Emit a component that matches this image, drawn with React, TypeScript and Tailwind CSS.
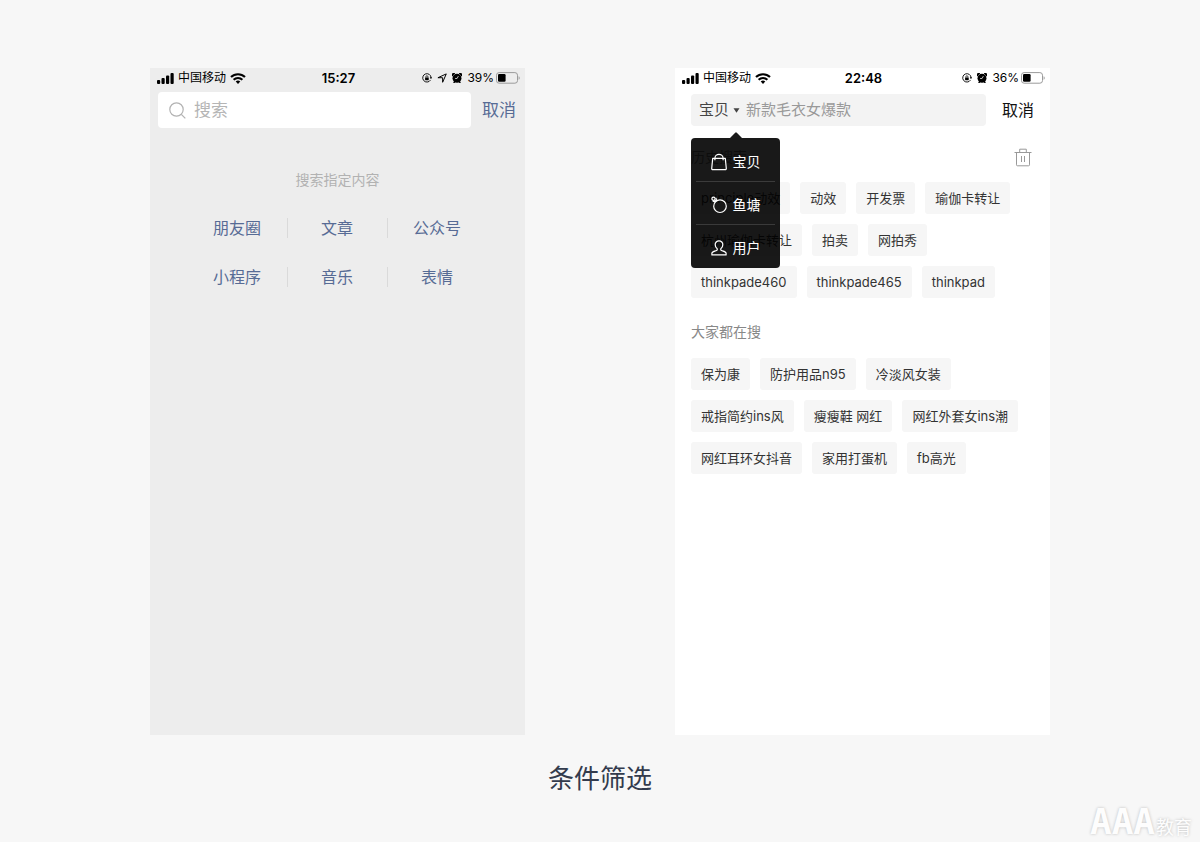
import { useState } from 'react';

const scopes = [
  { key: 'item', name: '宝贝' },
  { key: 'pond', name: '鱼塘' },
  { key: 'user', name: '用户' },
];

const categories = ['朋友圈', '文章', '公众号', '小程序', '音乐', '表情'];

const historyTags = [
  'principle动效',
  '动效',
  '开发票',
  '瑜伽卡转让',
  '杭州瑜伽卡转让',
  '拍卖',
  '网拍秀',
  'thinkpade460',
  'thinkpade465',
  'thinkpad',
];

const hotTags = [
  '保为康',
  '防护用品n95',
  '冷淡风女装',
  '戒指简约ins风',
  '瘦瘦鞋 网红',
  '网红外套女ins潮',
  '网红耳环女抖音',
  '家用打蛋机',
  'fb高光',
];

const SignalIcon = () => (
  <svg width="17" height="11" viewBox="0 0 17 11" aria-hidden="true">
    <rect x="0" y="7" width="3.2" height="4" rx="1" />
    <rect x="4.5" y="5" width="3.2" height="6" rx="1" />
    <rect x="9" y="2.6" width="3.2" height="8.4" rx="1" />
    <rect x="13.5" y="0" width="3.2" height="11" rx="1" />
  </svg>
);

const WifiIcon = () => (
  <svg width="16" height="11" viewBox="0 0 16 11" fill="none" stroke="#000" aria-hidden="true">
    <path d="M1 4.1a10 10 0 0 1 14 0" strokeWidth="2.1" />
    <path d="M3.6 6.8a6.3 6.3 0 0 1 8.8 0" strokeWidth="2" />
    <path d="M5.7 8.4a3.6 3.6 0 0 1 4.6 0L8 11z" fill="#000" stroke="none" />
  </svg>
);

const RotationLockIcon = () => (
  <svg width="10" height="10" viewBox="0 0 11 11" fill="none" stroke="#000" aria-hidden="true">
    <path d="M9.3 7.8A4.6 4.6 0 1 1 10 5.2" strokeWidth="1" />
    <path d="M8.6 4.8h2.4L9.9 6.8z" fill="#000" stroke="none" />
    <rect x="3.4" y="4.9" width="4" height="3" rx="0.4" fill="#000" stroke="none" />
    <path d="M4.3 5V4.1a1.1 1.1 0 0 1 2.2 0V5" strokeWidth="0.8" />
  </svg>
);

const LocationIcon = () => (
  <svg width="10" height="10" viewBox="0 0 11 11" fill="none" stroke="#000" strokeLinejoin="round" aria-hidden="true">
    <path d="M10.2 1 6.2 10.2V5.2H1z" strokeWidth="1.1" />
  </svg>
);

const AlarmIcon = () => (
  <svg width="10" height="10" viewBox="0 0 11 11" aria-hidden="true">
    <circle cx="5.5" cy="5.8" r="4.9" />
    <path d="M.5 3.8A2.2 2.2 0 0 1 3.6.3zM10.5 3.8A2.2 2.2 0 0 0 7.4.3zM2.6 8.4 1.2 10.9h1.7l1-1.2zM8.4 8.4l1.4 2.5H8.1l-1-1.2z" />
    <path d="M7 3.4 5.6 6H3.4" fill="none" stroke="#fff" strokeWidth="0.8" />
  </svg>
);

const BatteryIcon = () => (
  <svg width="24" height="12" viewBox="0 0 24 12" aria-hidden="true">
    <rect x="0.5" y="0.6" width="21" height="10.6" rx="2.6" fill="none" stroke="#9a9a9a" />
    <rect x="2" y="2.1" width="7.6" height="7.6" rx="1.2" />
    <path d="M22.6 4.2c1.5.5 1.5 3 0 3.5z" fill="#9a9a9a" />
  </svg>
);

const SearchIcon = () => (
  <svg width="17" height="17" viewBox="0 0 17 17" fill="none" stroke="#b2b2b2" strokeWidth="1.2" aria-hidden="true">
    <circle cx="7.5" cy="7.5" r="6.7" />
    <path d="m12.3 12.3 4 4" />
  </svg>
);

const TrashIcon = () => (
  <svg width="18" height="19" viewBox="0 0 18 19" fill="none" stroke="#999" aria-hidden="true">
    <path d="M.5 4.5h17M5.7 4.3V1.2h6.6v3.1M2.5 4.7v12.1a1 1 0 0 0 1 1h11a1 1 0 0 0 1-1V4.7M7.5 8v6M10.5 8v6" />
  </svg>
);

const ScopeIcon = ({ type }: { type: string }) => (
  <svg width="16" height="18" viewBox="0 0 16 18" fill="none" stroke="#fff" strokeWidth="1.2" strokeLinejoin="round" aria-hidden="true">
    {type === 'item' && (
      <path d="M1.7 5.4h12.6l1 10.1a1 1 0 0 1-1 1.1H1.7a1 1 0 0 1-1-1.1zM3.9 7.3V5.2a4.1 3.9 0 0 1 8.2 0v2.1" />
    )}
    {type === 'pond' && (
      <>
        <circle cx="9" cy="10.2" r="6.3" />
        <circle cx="2.5" cy="2.7" r="1.6" />
        <path d="M3.7 4 5 5.3M1.7 5.2l2.7.6M4.9 1.8l.8 3" />
      </>
    )}
    {type === 'user' && (
      <path d="M8 1.8a3.8 3.8 0 0 0-3.8 4c0 1.7.8 3.1 2 4 .4 1-.3 1.6-1.3 1.9-2 .6-3.8 1-4 2.5v1.7h14.2v-1.7c-.2-1.5-2-1.9-4-2.5-1-.3-1.7-.9-1.3-1.9 1.2-.9 2-2.3 2-4a3.8 3.8 0 0 0-3.8-4z" />
    )}
  </svg>
);

const StatusBar = ({ time, battery, showLocation }: { time: string; battery: string; showLocation?: boolean }) => (
  <header className="flex h-5 items-center pl-[7px] pr-[5px] text-xs leading-5 text-black">
    <div className="flex flex-1 items-center gap-1">
      <SignalIcon />
      <span>中国移动</span>
      <WifiIcon />
    </div>
    <time className="text-[13px] font-semibold leading-5">{time}</time>
    <div className="flex flex-1 items-center justify-end gap-[5px]">
      <RotationLockIcon />
      {showLocation && <LocationIcon />}
      <AlarmIcon />
      <div className="flex items-center gap-[2px]">
        <span>{battery}</span>
        <BatteryIcon />
      </div>
    </div>
  </header>
);

const TagList = ({ tags }: { tags: string[] }) => (
  <ul className="flex flex-wrap gap-[10px]">
    {tags.map((tag) => (
      <li key={tag}>
        <button type="button" className="block h-8 rounded-[3px] bg-[#f6f6f6] px-[10px] text-[13px] leading-8 text-[#333]">
          {tag}
        </button>
      </li>
    ))}
  </ul>
);

const ChatSearch = () => (
  <section className="aspect-[375/667] w-5/12 bg-[#ededed]">
    <StatusBar time="15:27" battery="39%" showLocation />

    <form className="flex items-center gap-[11px] pl-2 pr-[9px] pt-1">
      <label className="flex h-9 min-w-0 flex-1 items-center gap-2 rounded bg-white px-[11px]">
        <SearchIcon />
        <input
          type="search"
          aria-label="搜索"
          placeholder="搜索"
          className="min-w-0 flex-1 bg-transparent text-[17px] leading-6 outline-none placeholder:text-[#b5b5b5]"
        />
      </label>
      <button type="button" className="text-[17px] leading-6 text-[#576b95]">
        取消
      </button>
    </form>

    <h2 className="mt-[42px] text-center text-sm text-[#b2b2b2]">搜索指定内容</h2>
    <nav className="mx-auto mt-7 grid w-4/5 grid-cols-3 gap-y-[29px]">
      {categories.map((name) => (
        <a
          key={name}
          href="#"
          className="border-r border-[#dadada] text-center text-base leading-5 text-[#576b95] nth-[3n]:border-transparent"
        >
          {name}
        </a>
      ))}
    </nav>
  </section>
);

const MarketSearch = () => {
  const [isOpen, setIsOpen] = useState(true);
  const [scope, setScope] = useState('宝贝');

  const handleSelect = (name: string) => {
    setScope(name);
    setIsOpen(false);
  };

  return (
    <section className="aspect-[375/667] w-5/12 bg-white">
      <StatusBar time="22:48" battery="36%" />

      <form className="flex items-center gap-4 px-4 pt-[6px]">
        <div className="relative flex h-8 min-w-0 flex-1 items-center rounded bg-[#f3f3f3] px-2">
          <button
            type="button"
            aria-haspopup="true"
            aria-expanded={isOpen}
            onClick={() => setIsOpen(!isOpen)}
            className="flex shrink-0 items-center gap-1 text-[15px] leading-6 text-[#444]"
          >
            {scope}
            <svg width="7" height="5" viewBox="0 0 7 5" fill="#444" aria-hidden="true">
              <path d="M.5.3h6L3.5 4.7z" />
            </svg>
          </button>
          <input
            type="text"
            aria-label="搜索宝贝"
            placeholder="新款毛衣女爆款"
            className="ml-[6px] min-w-0 flex-1 bg-transparent text-[15px] leading-6 outline-none placeholder:text-[#999]"
          />

          {isOpen && (
            <div className="absolute left-0 top-full z-10 mt-[6px] w-[89px]">
              <svg width="12" height="6" viewBox="0 0 12 6" className="mx-auto" fill="#1a1a1a" aria-hidden="true">
                <path d="M0 6 5.2.7a1 1 0 0 1 1.6 0L12 6z" />
              </svg>
              <ul className="divide-y divide-white/15 rounded bg-black/90 px-[5px] py-px">
                {scopes.map(({ key, name }) => (
                  <li key={key}>
                    <button
                      type="button"
                      onClick={() => handleSelect(name)}
                      className="flex h-[42px] w-full items-center justify-center gap-[6px] pt-1 text-sm text-white"
                    >
                      <ScopeIcon type={key} />
                      {name}
                    </button>
                  </li>
                ))}
              </ul>
            </div>
          )}
        </div>
        <button type="button" className="text-base leading-6 text-[#111]">
          取消
        </button>
      </form>

      <div className="px-4 pt-[21px]">
        <div className="mb-[15px] flex items-center justify-between pr-[2px]">
          <h2 className="text-sm text-[#888]">历史搜索</h2>
          <button type="button" aria-label="清空历史搜索">
            <TrashIcon />
          </button>
        </div>
        <TagList tags={historyTags} />

        <h2 className="mb-4 mt-6 text-sm text-[#888]">大家都在搜</h2>
        <TagList tags={hotTags} />
      </div>
    </section>
  );
};

const App = () => {
  return (
    <div className="relative min-h-screen bg-[#f7f7f7] pt-[68px] font-['Inter','Noto_Sans_CJK_SC',sans-serif]">
      <main className="mx-auto flex w-3/4 justify-between">
        <ChatSearch />
        <MarketSearch />
      </main>
      <h1 className="pt-6 text-center text-[26px] leading-10 text-[#333b4d]">条件筛选</h1>

      {/* Watermark */}
      <div className="absolute bottom-1 right-2 flex items-end gap-px text-[#fdfdfd] [text-shadow:0_0_3px_#bbb]">
        <span className="font-['DejaVu_Sans_Mono',monospace] text-[36px] font-bold leading-8">AAA</span>
        <span className="text-lg leading-5">教育</span>
      </div>
    </div>
  );
};

export default App;
